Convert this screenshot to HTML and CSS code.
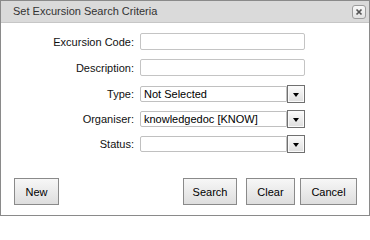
FILE: index.html
```html
<!DOCTYPE html>
<html>
<head>
<meta charset="utf-8">
<link rel="stylesheet" href="styles.css">
</head>
<body>
<div class="dialog">
  <div class="header">
    <span class="title">Set Excursion Search Criteria</span>
    <span class="close"><svg width="12" height="12" viewBox="0 0 12 12"><path d="M3.5 3.5 L8.5 8.5 M8.5 3.5 L3.5 8.5" stroke="#555" stroke-width="1.7" fill="none"/></svg></span>
  </div>
  <div class="form">
    <div class="row row-text">
      <label class="label">Excursion Code:</label>
      <div class="input"></div>
    </div>
    <div class="row row-text">
      <label class="label">Description:</label>
      <div class="input"></div>
    </div>
    <div class="row row-select">
      <label class="label">Type:</label>
      <div class="select"><div class="field">Not Selected</div><div class="arrow"><span class="tri"></span></div></div>
    </div>
    <div class="row row-select">
      <label class="label">Organiser:</label>
      <div class="select"><div class="field">knowledgedoc [KNOW]</div><div class="arrow"><span class="tri"></span></div></div>
    </div>
    <div class="row row-select">
      <label class="label">Status:</label>
      <div class="select"><div class="field"></div><div class="arrow"><span class="tri"></span></div></div>
    </div>
  </div>
  <div class="footer">
    <button class="btn btn-new">New</button>
    <div class="right">
      <button class="btn btn-search">Search</button>
      <button class="btn btn-clear">Clear</button>
      <button class="btn btn-cancel">Cancel</button>
    </div>
  </div>
</div>
</body>
</html>
```

FILE: styles.css
```css
html, body {
  margin: 0;
  padding: 0;
  background: #ffffff;
}
* { box-sizing: border-box; }
.dialog {
  width: 370px;
  height: 216px;
  border: 1px solid #8a8a8a;
  display: flex;
  flex-direction: column;
  font-family: "Liberation Sans", Arial, sans-serif;
  font-size: 11px;
  color: #111;
  background: #fff;
}
.header {
  height: 22px;
  background: #dadada;
  border-bottom: 1px solid #c6c6c6;
  display: flex;
  align-items: center;
  justify-content: space-between;
  padding: 0 3px 0 12px;
}
.title {
  color: #333;
  font-size: 11px;
  line-height: 21px;
}
.close {
  width: 14px;
  height: 14px;
  border: 1px solid #9c9c9c;
  border-radius: 3px;
  background: linear-gradient(#f8f8f8, #e2e2e2);
  display: flex;
  align-items: center;
  justify-content: center;
  margin-top: 1px;
}
.close svg { display: block; }
.form {
  padding-top: 10px;
  display: flex;
  flex-direction: column;
}
.row {
  display: grid;
  grid-template-columns: 133px 165px;
  column-gap: 6px;
  align-items: center;
}
.row-text { height: 17px; margin-bottom: 9px; }
.row-select { height: 18px; margin-bottom: 7px; }
.label {
  text-align: right;
  color: #111;
}
.input {
  height: 17px;
  border: 1px solid #c4c4c4;
  border-radius: 2px;
  background: #fff;
}
.select {
  display: flex;
  align-items: center;
  height: 18px;
}
.field {
  flex: 1;
  height: 16px;
  border: 1px solid #c0c0c0;
  border-radius: 2px 0 0 2px;
  background: #fff;
  padding-left: 3px;
  line-height: 14px;
  color: #000;
  white-space: nowrap;
  overflow: hidden;
}
.arrow {
  width: 18px;
  height: 18px;
  border: 1px solid #707070;
  background: linear-gradient(#fcfcfc, #dedede);
  box-shadow: inset 0 0 0 1px #fafafa;
  display: flex;
  align-items: center;
  justify-content: center;
  padding-top: 1px;
}
.tri {
  width: 0;
  height: 0;
  border-left: 3.5px solid transparent;
  border-right: 3.5px solid transparent;
  border-top: 4px solid #000;
}
.footer {
  margin-top: auto;
  padding: 0 12px 10px 13px;
  display: flex;
  align-items: center;
  justify-content: space-between;
}
.right {
  display: flex;
}
.btn {
  height: 27px;
  border: 1px solid #8a8a8a;
  background: linear-gradient(#f7f7f7, #dedede);
  font-family: "Liberation Sans", Arial, sans-serif;
  font-size: 11px;
  color: #000;
  padding: 0;
  margin: 0;
  border-radius: 0;
}
.btn-new { width: 45px; }
.btn-search { width: 54px; margin-right: 9px; }
.btn-clear { width: 49px; margin-right: 5px; }
.btn-cancel { width: 57px; }
```
